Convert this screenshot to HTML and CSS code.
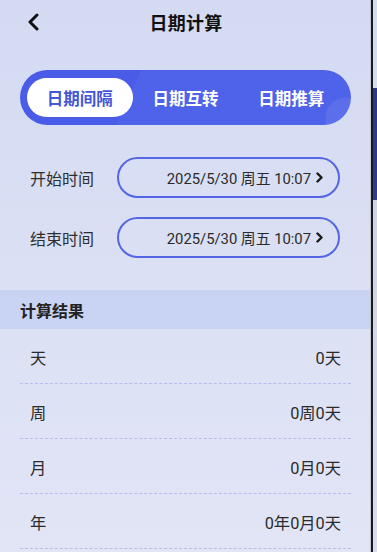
FILE: index.html
```html
<!DOCTYPE html>
<html lang="zh-CN">
<head>
<meta charset="utf-8">
<title>日期计算</title>
<link rel="stylesheet" href="styles.css">
</head>
<body>
<div class="screen">
  <div class="app">
    <header class="topbar">
      <span class="back">
        <svg width="14" height="18" viewBox="0 0 14 18"><path d="M11 2 L4 9 L11 16" fill="none" stroke="#111" stroke-width="3" stroke-linecap="round" stroke-linejoin="round"/></svg>
      </span>
      <h1 class="title">日期计算</h1>
    </header>

    <nav class="tabs">
      <span class="tab active">日期间隔</span>
      <span class="tab">日期互转</span>
      <span class="tab">日期推算</span>
    </nav>

    <section class="form">
      <div class="field">
        <span class="label">开始时间</span>
        <div class="picker">
          <span class="date">2025/5/30 周五 10:07</span>
          <svg class="chev" width="7" height="11" viewBox="0 0 7 11"><path d="M1.5 1.5 L5.5 5.5 L1.5 9.5" fill="none" stroke="#1a1a1a" stroke-width="2.4" stroke-linecap="round" stroke-linejoin="round"/></svg>
        </div>
      </div>
      <div class="field">
        <span class="label">结束时间</span>
        <div class="picker">
          <span class="date">2025/5/30 周五 10:07</span>
          <svg class="chev" width="7" height="11" viewBox="0 0 7 11"><path d="M1.5 1.5 L5.5 5.5 L1.5 9.5" fill="none" stroke="#1a1a1a" stroke-width="2.4" stroke-linecap="round" stroke-linejoin="round"/></svg>
        </div>
      </div>
    </section>

    <div class="section-head">计算结果</div>

    <ul class="results">
      <li class="row"><span>天</span><span>0天</span></li>
      <li class="row"><span>周</span><span>0周0天</span></li>
      <li class="row"><span>月</span><span>0月0天</span></li>
      <li class="row"><span>年</span><span>0年0月0天</span></li>
    </ul>
  </div>
  <div class="edge-light"></div>
  <div class="edge-dark"></div>
  <div class="edge-strip"></div>
</div>
</body>
</html>
```

FILE: styles.css
```css
* { box-sizing: border-box; }

html, body {
  margin: 0;
  padding: 0;
}

body {
  width: 377px;
  height: 552px;
  overflow: hidden;
  font-family: Roboto, "Noto Sans CJK SC", sans-serif;
  color: #2b2b2b;
}

.screen {
  display: flex;
  height: 552px;
}

.app {
  width: 370px;
  height: 552px;
  background: linear-gradient(180deg, #d3daf2 0%, #dbe0f4 50%, #e1e5f6 100%);
  display: flex;
  flex-direction: column;
}

.edge-light {
  width: 1px;
  background: #c4c7d2;
}

.edge-dark {
  width: 2px;
  background: #1a1a22;
}

.edge-strip {
  width: 4px;
  background: linear-gradient(180deg, #d6dcf2 0px, #d6dcf2 88px, #2b3788 88px, #2f3b8c 200px, #cfd3e4 200px, #d9ddef 552px);
}

/* top bar */
.topbar {
  height: 44px;
  display: flex;
  align-items: center;
  justify-content: center;
  position: relative;
}

.back {
  position: absolute;
  left: 26px;
  top: 13px;
  display: flex;
}

.title {
  margin: 0 0 0 2px;
  font-size: 18px;
  font-weight: 700;
  color: #111;
  letter-spacing: 0.3px;
}

/* tabs */
.tabs {
  margin: 26px 19px 0 20px;
  height: 55px;
  border-radius: 28px;
  padding: 8px 7px;
  display: grid;
  grid-template-columns: repeat(3, 1fr);
  background:
    radial-gradient(circle at 326px 48px, rgba(255,255,255,0.08) 0 20px, transparent 21px),
    linear-gradient(115deg, #4a5ce7 0%, #4a5ce7 34%, #4f63ea 34%, #4e62ea 100%);
}

.tab {
  display: flex;
  align-items: center;
  justify-content: center;
  font-size: 16.5px;
  font-weight: 700;
  color: #fff;
  border-radius: 20px;
}

.tab.active {
  background: #fff;
  color: #4356d6;
}

/* form */
.form {
  margin-top: 32px;
  display: flex;
  flex-direction: column;
  gap: 19px;
}

.field {
  display: flex;
  align-items: center;
  padding: 0 30px;
  height: 41px;
}

.label {
  width: 87px;
  font-size: 16px;
  color: #2e2e2e;
  font-family: "Noto Sans CJK SC", sans-serif;
}

.picker {
  flex: 1;
  height: 41px;
  border: 2px solid #5466e3;
  border-radius: 21px;
  display: flex;
  align-items: center;
  justify-content: flex-end;
  padding-right: 15px;
  gap: 5px;
}

.date {
  font-size: 14.8px;
  color: #2a2a2a;
}

/* section */
.section-head {
  margin-top: 32px;
  height: 39px;
  background: #c9d3f3;
  display: flex;
  align-items: center;
  padding-left: 20px;
  font-size: 16px;
  font-weight: 700;
  color: #222;
  font-family: "Noto Sans CJK SC", sans-serif;
}

.results {
  list-style: none;
  margin: 0 19px 0 20px;
  padding: 0;
}

.row {
  height: 55px;
  padding: 2px 10px 0;
  display: flex;
  align-items: center;
  justify-content: space-between;
  border-bottom: 1px dashed #b5bdee;
  font-size: 16.3px;
  color: #2b2b2b;
}
```
